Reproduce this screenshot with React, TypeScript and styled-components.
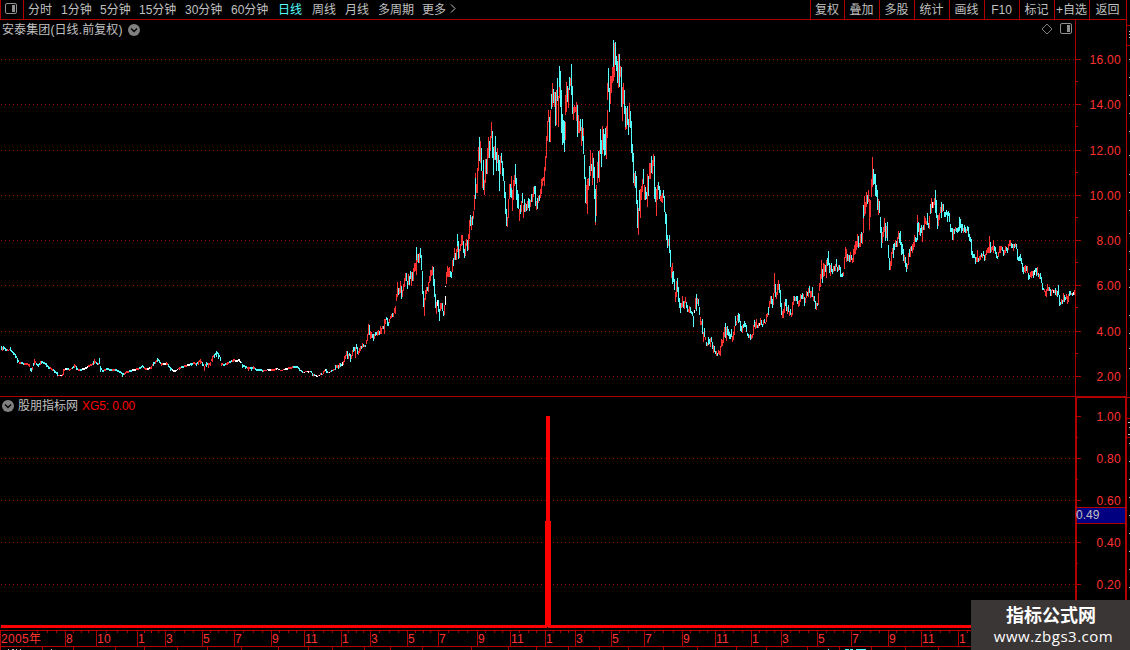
import React from 'react';
import styled, { createGlobalStyle } from 'styled-components';

const RED = '#b00000';
const LABEL_RED = '#ff3232';
const CYAN = '#54fcfc';
const GREY = '#c0c0c0';

const GlobalStyle = createGlobalStyle`
  html, body {
    margin: 0;
    background: #000;
    overflow: hidden;
  }
  * {
    box-sizing: border-box;
  }
`;

const Screen = styled.div`
  position: relative;
  width: 1130px;
  height: 650px;
  display: flex;
  overflow: hidden;
  background: #000;
  color: ${GREY};
  font: 12px/14px "Liberation Sans", "Noto Sans CJK SC", sans-serif;
  white-space: nowrap;
`;

const Main = styled.div`
  width: 1127px;
  flex: none;
  display: flex;
  flex-direction: column;
  border-right: solid 1px ${RED};
`;

const Toolbar = styled.div`
  height: 20px;
  flex: none;
  display: flex;
  border-bottom: solid 1px ${RED};
`;

const ToggleCell = styled.div`
  width: 24px;
  display: flex;
  align-items: center;
  justify-content: center;
  padding: 0 2px 2px 0;
  border-left: solid 1px ${RED};
  border-right: solid 1px ${RED};
`;

const Periods = styled.div`
  display: flex;
  flex: 1;
  padding: 3px 0 0 4px;
`;

const Period = styled.span<{ width: number; active?: boolean }>`
  width: ${({ width }) => width}px;
  color: ${({ active }) => (active ? CYAN : GREY)};
`;

const Tools = styled.div`
  display: flex;
`;

const Tool = styled.div<{ width: number }>`
  width: ${({ width }) => width}px;
  display: flex;
  justify-content: center;
  padding: 3px 1px 0 0;
  border-left: solid 1px ${RED};
`;

const PricePanel = styled.section`
  position: relative;
  height: 376px;
  flex: none;
`;

const IndicatorPanel = styled.section`
  position: relative;
  height: 234px;
  flex: none;
`;

const DatePanel = styled.section`
  height: 20px;
  flex: none;
`;

const Title = styled.div<{ gap: number }>`
  position: absolute;
  top: 2px;
  left: 2px;
  display: flex;
  align-items: center;
  gap: ${({ gap }) => gap}px;
`;

const StockName = styled.span`
  padding-top: 1px;
  letter-spacing: 0.1px;
`;

const IndicatorName = styled.span`
  padding-top: 1px;
`;

const PanelIcons = styled.div`
  position: absolute;
  top: 3px;
  right: 54px;
  display: flex;
  align-items: center;
  gap: 7px;
`;

const Value = styled.span`
  color: #f00;
  letter-spacing: -0.1px;
`;

const Chart = styled.svg`
  display: block;
  shape-rendering: crispEdges;
`;

const AxisText = styled.text`
  fill: ${LABEL_RED};
  font-size: 12px;
  letter-spacing: 0.3px;
`;

const Cursor = styled.div`
  position: absolute;
  top: 111px;
  left: 1077px;
  width: 48px;
  height: 17px;
  background: #000080;
  border-top: solid 1px ${RED};
  border-bottom: solid 1px ${RED};
  text-indent: -1px;
`;

const Watermark = styled.div`
  position: absolute;
  left: 971px;
  top: 600px;
  width: 159px;
  height: 50px;
  display: flex;
  flex-direction: column;
  align-items: center;
  padding: 3px 0 0 1px;
  background: #3b3636;
  color: #fff;
`;

const WatermarkName = styled.div`
  font: bold 18px/22px "Noto Sans CJK SC", sans-serif;
`;

const WatermarkUrl = styled.div`
  padding-left: 5px;
  font: 15px/22px "Open Sans", "Noto Sans", sans-serif;
  letter-spacing: 0.5px;
`;

const PERIODS = [
  { label: '分时', width: 33 },
  { label: '1分钟', width: 39 },
  { label: '5分钟', width: 39 },
  { label: '15分钟', width: 46 },
  { label: '30分钟', width: 46 },
  { label: '60分钟', width: 47 },
  { label: '日线', width: 34, active: true },
  { label: '周线', width: 33 },
  { label: '月线', width: 33 },
  { label: '多周期', width: 44 },
  { label: '更多', width: 27 },
];

const TOOLS = [
  { label: '复权', width: 34 },
  { label: '叠加', width: 35 },
  { label: '多股', width: 35 },
  { label: '统计', width: 35 },
  { label: '画线', width: 35 },
  { label: 'F10', width: 35 },
  { label: '标记', width: 35 },
  { label: '+自选', width: 35 },
  { label: '返回', width: 37 },
];

const PRICES = [
  { y: 59, label: '16.00' },
  { y: 104, label: '14.00' },
  { y: 150, label: '12.00' },
  { y: 195, label: '10.00' },
  { y: 240, label: '8.00' },
  { y: 285, label: '6.00' },
  { y: 331, label: '4.00' },
  { y: 376, label: '2.00' },
];

const LEVELS = [
  { y: 416, label: '1.00' },
  { y: 458, label: '0.80' },
  { y: 500, label: '0.60' },
  { y: 542, label: '0.40' },
  { y: 584, label: '0.20' },
];

const MONTHS: [number, string][] = [
  [0, '2005年'], [65, '8'], [96, '10'], [137, '1'], [165, '3'], [202, '5'], [234, '7'],
  [271, '9'], [304, '11'], [341, '1'], [370, '3'], [407, '5'], [438, '7'], [477, '9'],
  [510, '11'], [545, '1'], [575, '3'], [611, '5'], [644, '7'], [682, '9'], [715, '11'],
  [751, '1'], [781, '3'], [817, '5'], [851, '7'], [888, '9'], [921, '11'], [958, '1'],
];

const LOWER_TICKS = [
  0, 42, 73, 115, 144, 177, 207, 241, 278, 308, 332, 364, 390, 422, 471, 508, 536, 568,
  599, 628, 663, 697, 736, 766, 807, 839, 871, 905, 938,
];

// x, top, bottom, colour; the days between two entries are interpolated
const FLAT = `
1,346,350,c 2,347,351,r 3,346,350,c 5,348,351,c 8,350,351,r 10,347,351,c 11,350,352,c 13,352,355,c
15,354,358,c 17,358,363,c 19,362,364,r 22,362,364,c 24,363,365,r 27,363,365,r 29,364,367,r
30,368,371,c 31,368,372,c 32,367,370,r 33,363,366,c 34,359,365,r 36,363,365,c 38,364,367,c 40,361,365,r
41,361,364,c 44,362,364,c 46,363,367,c 48,366,369,c 51,368,370,r 54,370,373,c 56,372,374,c
57,372,376,c 58,375,376,r 60,375,376,w 62,374,376,r 63,369,375,r 65,368,370,w 67,368,370,c 70,369,370,r
72,367,369,c 74,364,368,r 76,366,370,c 78,369,371,r 80,369,371,c 83,368,370,w 86,367,369,w
88,365,367,r 91,364,366,r 93,361,365,c 94,359,364,r 96,362,364,c 98,363,365,r 99,358,364,c
100,366,372,c 102,370,372,c 104,369,371,r 107,368,370,c 110,369,371,c 113,369,371,r 116,369,371,c
120,371,373,c 122,373,377,c 124,373,375,r 126,371,373,r 130,370,372,c 133,369,371,w 137,368,370,r 140,367,369,c
142,365,367,c 145,368,370,r 148,368,370,w 151,366,369,r 153,362,366,c 155,361,364,r 157,358,362,c
159,360,363,c 161,363,366,r 164,363,365,w 166,362,365,r 168,364,367,c 170,367,371,c 173,370,372,w 176,370,371,w
179,367,370,r 182,366,368,c 185,365,367,r 188,364,366,w 191,363,366,c 194,362,364,r 196,363,366,c
198,361,365,r 200,359,364,r 202,362,366,c 204,366,371,r 206,362,367,c 208,363,368,r
210,362,366,r 212,356,362,r 214,354,358,c 216,351,357,c 218,353,359,c 220,357,361,c
221,363,366,r 224,364,366,c 227,362,365,r 230,361,363,c 233,359,362,r 236,360,362,w 239,359,362,w 241,362,363,c
242,364,368,c 245,366,369,c 248,367,371,r 251,367,371,c 253,366,369,r 256,369,371,c 260,369,371,c 264,370,371,r
268,369,371,w 272,369,371,r 277,368,369,w 281,370,371,r 285,368,370,w 289,367,369,r 294,366,368,c
297,366,368,c 299,368,371,c`;

// one entry per trading day from x = 300, as colour, top and bottom
const DAILY = `
w370-371 c370-372 c371-373 r372-373 w372-373 r371-372 r371-372 w371-372 w371-373 r371-372 c371-372 c371-373 c373-376 r374-376 c374-376 w375-376 w375-377 w376-377 r375-376 w375-376
r373-375 c373-375 r374-375 r371-374 r370-372 w369-371 c369-373 c371-373 r372-373 w372-373 r371-372 c370-372 c370-371 r369-371 r369-370 c365-370 r365-368 r365-368 c365-369 r363-368
c363-367 c364-366 w362-366 r361-365 r356-362 r355-359 r351-356 c351-359 r354-359 c353-356 c354-362 r355-359 r350-356 c347-352 c347-351 r347-358 c344-349 c347-354 r351-355 r348-353
r346-351 c346-349 r343-348 c344-347 r345-347 c345-347 r340-344 r334-341 r324-335 c325-335 r331-339 r332-338 c334-338 c334-341 r334-339 c332-336 c332-335 r331-336 r330-335 c331-335
r326-334 r328-334 r326-329 c326-329 r319-334 r319-324 c317-320 c318-326 c322-326 r319-323 r316-319 r314-318 c313-317 r313-317 r308-313 r306-314 r294-301 r282-297 c288-295 r288-294
r281-293 c286-299 r290-297 r284-291 r278-287 r273-281 c273-281 c281-289 r274-285 c276-285 c271-279 r272-286 c272-281 r268-281 r263-272 r263-271 c247-260/r260-275 r254-262 c254-263 r253-263
c248-258 c255-270 c271-294 c291-307 r298-316 r290-300 r287-294 c287-291 r282-292 r276-283 r270-281 r270-276 r266-275 c267-286 c279-297 c294-308 r302-314 w300-306 c300-312 c309-321
r303-311 r303-309 c303-311 c311-316 r305-315 w286-287/w296-305 r272-284 r266-277 r268-277 r267-277 c271-277 c272-278 r260-272 c258-266 r248-260 c253-260 r249-260 c234-246/r246-252 c241-259 r249-258
r244-251 r235-246 r235-245 c241-253 c249-258 r243-256 r239-246 c240-251 r234-250 r220-239 c215-226 r217-230 c216-225 r211-219 r195-210 r173-178/c178-199 r184-193 r168-193 r147-171 c137-161
r141-163 c148-171 r171-188 c160-190 r180-195 r159-183 c159-174 r148-174 r137-158 c141-158 r136-151 r122-138 c131-158 c147-175 r146-160 c136-160 c152-171 r148-163 c155-171 c160-191
r156-174 c153-163 c161-176 c168-181 c181-198 c192-214 c209-226 r217-227 r199-218 r184-199 c184-197 r176-188/c188-198 r190-211 r180-200 r175-186 c164-184 c178-200 c190-208 c194-209 r209-221
c205-214 r201-212 c193-203 r205-218 c199-212 r203-212 c204-211 r201-210 c198-208 c199-211 r200-207 c194-202 r194-202 r187-197 c186-194 c186-206 r201-210 c198-209 r196-203 c195-201
r189-198 r179-194 r178-186 r177-181 r167-186 r156-171 r136-158 r121-141 r110-122 c117-142 r110-142 c94-109 r83-107 c89-103 r92-107 c92-126 r90-125 c78-101 r96-127 c66-87/r87-98
c71-107 c90-133 c114-145 c120-143 c121-152 r95-115/r122-140 r82-112 c86-102 r88-108 c77-90 r78-86 c64-95 c86-114 r107-120 r105-113 r107-112 r102-121 c105-137 r115-133 r121-133
c119-131 r127-146 c119-141 r128-136/c136-154 c155-179 c177-203 r185-204 r179-214 r178-190 c166-186 r150-176 c164-171 r153-185 c158-178 c167-199 c189-222/r222-225 r185-216 r162-183 c151-178 r150-182
c129-154 c140-167 r126-154 c129-150 c134-156 c128-155 r126-159 r83-100/r110-138 c68-92 c88-112 r76-104 r76-93 r67-83 c40-67/r67-81 r43-77 c42-65 c56-71 c61-83 r54-88 c54-87
r66-77 c67-107 r87-121 r83-104 c90-114 c106-127/r127-130 r108-129 c106-125 c119-135 r103-127 c111-128 c121-153 c144-162 c153-183 r173-186 c171-188 c176-204 c200-228 r208-235 c190-211
r189-218 r186-200 r179-192 c169-184 r185-200 c187-200 c192-199 r174-207 c176-196 r163-179 r163-179 c156-173 r160-174 r154-166 c156-199 c187-202 r189-216 r185-200 c182-190 c186-199
c190-196/r196-201 r196-202 r193-203 c190-198 c196-212 c212-224 c214-240 c235-248 r239-246 c235-253 c250-267 r267-278 r263-272/c272-284 c271-282 c279-290 r292-302 r281-297 c278-292 c287-302 c298-308
c303-313 r303-308 r296-307 c301-308 r301-309 r297-303 c302-308 c305-312 r309-312 r306-313 c307-313 c311-314 c312-316 c316-327 w310-313 r298-309 c294-311 r298-304 c299-306 c307-315
r317-325 r321-325 c319-334 r332-342 c328-337 r337-340 c342-346 r343-346 c337-345 c339-344 r338-347 c337-342 c342-349 r345-353 c346-352 c351-354 r351-356 c353-356 r350-354 r351-355
r346-356 r339-347 r340-346 r332-343 r327-337 c323-338 r327-341 c326-335 c329-336 c332-339 c334-339 c329-337 r336-342 r332-340 r326-335 c316-326 r321-325 r315-321 c313-323 c314-322
c321-331 c326-332 r325-333 c324-328 c321-327 c323-327 c325-332 c333-336 c334-338 r335-338 c334-340 r335-339 r334-338 r325-335 c320-327 r322-329 r319-328 c325-328 r323-328 w323-326
r318-325 c320-325 c324-327 r320-325 c319-323 r322-324 r314-322 r313-317 c307-315 r301-308 r296-304 c296-304 c299-308 r293-305 r273-293 c284-297 r292-299 r284-295 r280-290 c284-293
c290-307 c303-315 r311-318 r309-318 r302-313 c299-306 c299-311 r307-314 c305-312 r311-316 c309-315 r313-317 r302-315 r296-305 c296-301 r297-301 c296-301 c296-304 r301-307 r300-306
r294-302 c295-299 c293-299 r294-299 c297-306 r298-303 r291-298 c292-296 r288-297 c286-293 r291-298 r291-297 c287-297 r296-301 c296-302 c301-309 r303-310 c303-306 r293-305 r283-291
r274-287 r260-279 c269-283 r263-277 r264-276 c265-272 r260-278 c258-266 c251-265 c263-273 r265-276 c263-272 c269-274 r266-272 c266-271 r264-271 c259-267 c267-272 r265-271 c265-270
c267-277 c274-277 c273-277 r272-276 r257-269 r247-258 r249-262 c254-261 r255-261 c255-262 r252-262 c255-260 r258-263 r249-262 r245-255 r241-254 r241-250 r234-247 c236-248 r243-247
r234-247 c232-243 r233-244 c205-218/r218-233 r196-216 r202-214 r192-207 c195-204 r190-202 r199-230 r200-217 r179-197 r157-187 c169-185 c174-184 c174-196 c185-197 c190-210 r199-215 c201-213
c217-233 c227-248 r232-243 r227-237 r218-232 c223-241 r226-238 c222-241 c245-258 c258-270 r261-270 r252-266 r248-254 c244-258 c243-250 r240-247 c241-247 r237-247 r231-239 c233-243
c231-245 c242-255 c244-254 c249-261 r255-263 c257-267 c263-272 r264-269 r253-265 c249-257 r247-257 c246-251 r244-253 r242-250 r235-247 c237-242 c238-242 r215-223/c223-240 c222-232 r223-235
c228-236 c225-233 r227-242 c225-230 r216-230 r218-224 r221-225 c213-225 c223-228 r216-229 c204-214 r198-213 w202-208 r202-208 r198-205 c190-213 c200-218 c215-229 r215-226 r213-220
r207-213 c202-218 r204-212 c204-211 c212-217 c212-217 c210-215 c212-222 c211-216 c213-222 c224-232 c228-232 c228-240 r229-240 c229-234 r227-231 c228-232 c228-233 c227-232 c217-231
c219-228 c224-233 c224-231 r228-233 c225-232 c227-233 r229-233 c226-231 c227-237 c234-241 c237-242 c239-255 c251-258 c254-258 c254-258 c257-264 r257-262 r250-262 c258-262 r256-261
r255-260 c253-257 r254-258 c251-256 c255-261 r254-260 r250-255 r248-253 r247-253 r236-253 c242-253 r247-252 r246-250 r240-253 c246-251 c247-254 c252-258 c256-259 r252-257 r246-253
r246-253 r246-250 c247-251 c250-256 r250-255 r246-253 c247-251 c248-253 r244-250 r240-246 r240-246 c243-248 c244-248 r244-251 c244-248 r243-247 c244-249 c249-260 c257-261 c256-261
c254-261 c258-264 c263-272 c267-274 r266-272 r265-273 c266-271 r266-273 c273-280 c275-279 r272-277 r271-278 r271-276 c271-278 w270-275 c268-272 c268-276 r267-275 c273-277 r274-279
c273-279 c277-283 c283-290 c288-290 r289-292 r291-296 r289-297 r284-291 r287-291 c287-291 c289-296 r290-296 r289-291 w290-293 r290-293 c288-295 r290-296 c291-297 c285-295 c295-306
c302-305 r299-304 c300-304 r293-302 c295-302 c297-300 r294-299 r296-304 r294-302 c291-296 c291-295 r293-295 c293-296 w292-295 r290-295`;

type Bar = { x: number; top: number; bottom: number; tone: string };

const TONES: Record<string, string> = { r: '#ff3232', c: CYAN, w: '#fff' };

const readFlat = (): Bar[] => {
  const points = FLAT.trim().split(/\s+/).map((item) => {
    const [x, top, bottom, tone] = item.split(',');
    return { x: Number(x), top: Number(top), bottom: Number(bottom), tone };
  });
  const bars: Bar[] = [];
  points.forEach((point, i) => {
    const next = points[i + 1] || { ...point, x: 300 };
    for (let x = point.x; x < next.x; x += 1) {
      const t = (x - point.x) / (next.x - point.x);
      const top = Math.round(point.top + (next.top - point.top) * t);
      const height = t === 0 ? point.bottom - point.top : Math.min(2, point.bottom - point.top);
      bars.push({ x, top, bottom: top + height, tone: t > 0.6 ? next.tone : point.tone });
    }
  });
  return bars;
};

const readDaily = (): Bar[] => DAILY.trim().split(/\s+/).flatMap((day, i) => (
  day.split('/').map((part) => {
    const [top, bottom] = part.slice(1).split('-').map(Number);
    return { x: 300 + i, top, bottom, tone: part[0] };
  })
));

const BARS = [...readFlat(), ...readDaily()];

const tonePath = (tone: string) => BARS
  .filter((bar) => bar.tone === tone)
  .map(({ x, top, bottom }) => `M${x} ${top}h1V${bottom}h-1z`)
  .join('');

const GridLine: React.FC<{ y: number }> = ({ y }) => (
  <path d={`M1 ${y + 0.5}H1075`} stroke="#a00000" strokeDasharray="1 3" />
);

const Chevron: React.FC = () => (
  <svg width="12" height="12" viewBox="0 0 12 12">
    <circle cx="6" cy="6" r="6" fill="#808080" />
    <path d="M3 4.5l3 3 3-3" fill="none" stroke="#000" strokeWidth="1.4" />
  </svg>
);

const PanelIcon: React.FC = () => (
  <svg width="12" height="12" viewBox="0 0 12 12">
    <rect x="0.5" y="0.5" width="11" height="10" rx="1.5" fill="none" stroke="#909090" />
    <path d="M7 2h3v7H7z" fill="#909090" />
  </svg>
);

const PriceChart: React.FC = () => (
  <Chart width="1126" height="376" viewBox="0 20 1126 376">
    {PRICES.map(({ y, label }) => (
      <g key={label}>
        <GridLine y={y} />
        <path d={`M1076 ${y}h5v1h-5zM1076 ${y + (y === 376 ? -23 : 22)}h2v1h-2z`} fill={RED} />
        <AxisText x="1121" y={y + 5} textAnchor="end">{label}</AxisText>
      </g>
    ))}
    <path d="M1075 20h1v376h-1z" fill={RED} />
    {Object.keys(TONES).map((tone) => (
      <path key={tone} d={tonePath(tone)} fill={TONES[tone]} />
    ))}
  </Chart>
);

const IndicatorChart: React.FC = () => (
  <Chart width="1126" height="234" viewBox="0 396 1126 234">
    {LEVELS.map(({ y, label }) => (
      <g key={label}>
        {y > 416 && <GridLine y={y} />}
        <path d={`M1077 ${y}h4v1h-4zM1077 ${y + 21}h1v1h-1z`} fill={RED} />
        <AxisText x="1121" y={y + 5} textAnchor="end">{label}</AxisText>
      </g>
    ))}
    <path d="M0 396h1126v1H0zM1075 396h2v234h-2zM1075 397h51v1h-51zM1125 396h1v234h-1z" fill={RED} />
    <path d="M1 625H1075v3H1zM546 416h4v105h1v105h-6V521h1z" fill="#f00" />
    <path d="M547 627h1v1h-1z" fill="#000" />
  </Chart>
);

const DateAxis: React.FC = () => (
  <Chart width="1126" height="20" viewBox="0 630 1126 20">
    <path d="M0 630h1126v1H0zM0 646h1126v1H0z" fill={RED} />
    {MONTHS.map(([x, label], i) => {
      const start = i === 0 ? 28 : x;
      const end = i + 1 < MONTHS.length ? MONTHS[i + 1][0] : 992;
      return (
        <g key={x}>
          <path d={`M${x} 631h1v15h-1z`} fill={RED} />
          {[1, 2, 3].map((n) => (
            <path key={n} d={`M${Math.round(start + ((end - start) * n) / 4)} 631h1v2h-1z`} fill={RED} />
          ))}
          <AxisText x={x + 1} y="643">{label}</AxisText>
        </g>
      );
    })}
    {LOWER_TICKS.map((x) => (
      <path key={x} d={`M${x} 647h1v3h-1z`} fill={RED} />
    ))}
    <path d="M8 649h1v1h-1zM12 649h2v1h-2zM16 649h1v1h-1zM20 649h1v1h-1zM51 649h1v1h-1z" fill={GREY} />
    <path d="M828 649h1v1h-1zM845 649h4v1h-4zM850 649h3v1h-3zM856 649h10v1h-10z" fill={CYAN} />
  </Chart>
);

// left edge of the quote list that runs off the window
const SideStrip: React.FC = () => (
  <Chart width="3" height="650" viewBox="1127 0 3 650">
    <path d="M1127 25h3v1h-3zM1127 45h3v1h-3zM1127 397h3v1h-3zM1127 418h3v1h-3zM1127 437h3v1h-3z" fill={RED} />
    <path d="M1129 31h1v1h-1zM1129 34h1v1h-1zM1129 37h1v1h-1zM1128 422h2v1h-2zM1129 427h1v1h-1zM1128 434h2v1h-2z" fill={GREY} />
    {[59, 77, 95, 113, 131, 155, 174, 192, 210, 233, 251, 269, 287, 315, 333, 348, 368, 443, 461, 479, 497, 515, 533, 551, 569, 587].map((y) => (
      <path key={y} d={`M1129 ${y}h1v1h-1z`} fill={GREY} />
    ))}
  </Chart>
);

const App: React.FC = () => (
  <Screen>
    <GlobalStyle />
    <Main>
      <Toolbar>
        <ToggleCell><PanelIcon /></ToggleCell>
        <Periods>
          {PERIODS.map((period) => (
            <Period key={period.label} width={period.width} active={period.active}>
              {period.label}
            </Period>
          ))}
          <svg width="8" height="14" viewBox="0 0 8 14">
            <path d="M2 1.5l4 4-4 4" fill="none" stroke={GREY} />
          </svg>
        </Periods>
        <Tools>
          {TOOLS.map(({ label, width }) => (
            <Tool key={label} width={width}>{label}</Tool>
          ))}
        </Tools>
      </Toolbar>
      <PricePanel>
        <PriceChart />
        <Title gap={5}>
          <StockName>安泰集团(日线.前复权)</StockName>
          <Chevron />
        </Title>
        <PanelIcons>
          <svg width="12" height="12" viewBox="0 0 12 12">
            <path d="M6 1l5 5-5 5-5-5z" fill="none" stroke="#808080" />
          </svg>
          <PanelIcon />
        </PanelIcons>
      </PricePanel>
      <IndicatorPanel>
        <IndicatorChart />
        <Title gap={4}>
          <Chevron />
          <IndicatorName>股朋指标网</IndicatorName>
          <Value>XG5: 0.00</Value>
        </Title>
        <Cursor>0.49</Cursor>
      </IndicatorPanel>
      <DatePanel>
        <DateAxis />
      </DatePanel>
    </Main>
    <SideStrip />
    <Watermark>
      <WatermarkName>指标公式网</WatermarkName>
      <WatermarkUrl>www.zbgs3.com</WatermarkUrl>
    </Watermark>
  </Screen>
);

export default App;
